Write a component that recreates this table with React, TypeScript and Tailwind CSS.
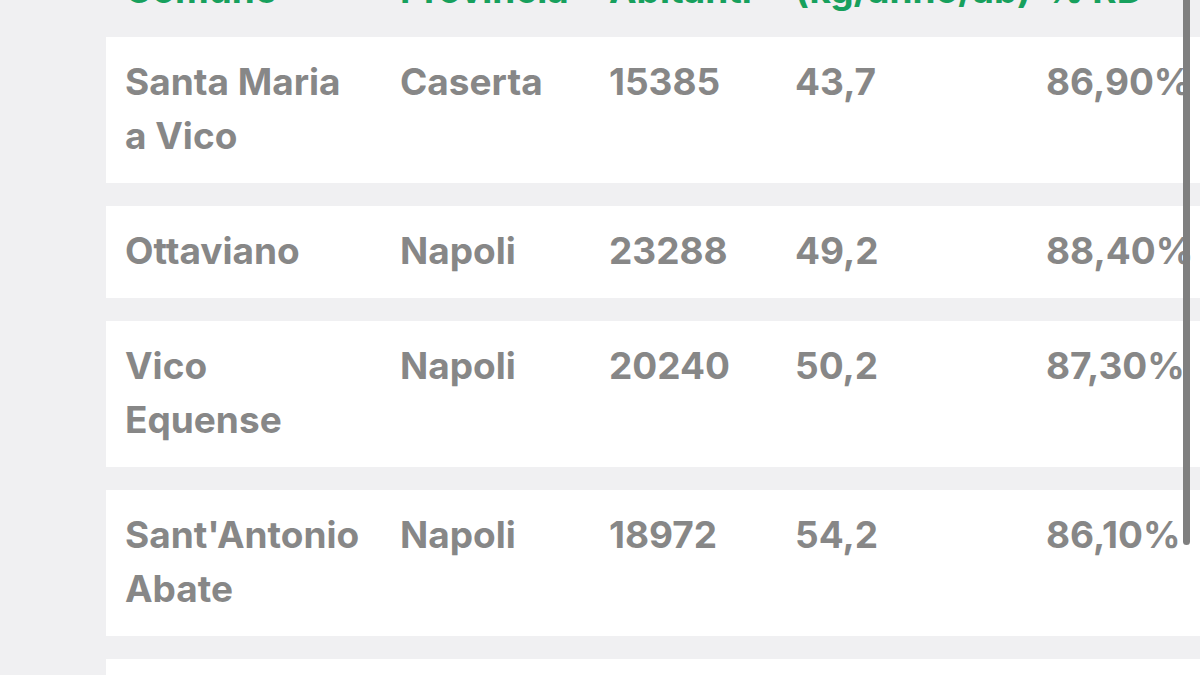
import React from "react";

const rows = [
  { c: "Santa Maria a Vico", p: "Caserta", a: "15385", k: "43,7", rd: "86,90%" },
  { c: "Ottaviano", p: "Napoli", a: "23288", k: "49,2", rd: "88,40%" },
  { c: "Vico Equense", p: "Napoli", a: "20240", k: "50,2", rd: "87,30%" },
  { c: "Sant'Antonio Abate", p: "Napoli", a: "18972", k: "54,2", rd: "86,10%" },
];

const font = { fontFamily: "Inter, 'Noto Sans', sans-serif" };

export default function App() {
  return (
    <div className="relative w-[1200px] h-[675px] overflow-hidden bg-[#f0f0f2]" style={font}>
      <div className="pl-[106px] flex flex-col">
        <div className="h-[37px] overflow-hidden relative">
          <div className="absolute left-0 top-[-37px] grid grid-cols-[275px_209px_186px_251px_1fr] pl-[19px] w-[1094px] text-[37px] leading-[54px] font-bold text-[#17a05d]">
            <div>Comune</div>
            <div>Provincia</div>
            <div>Abitanti</div>
            <div className="whitespace-nowrap">(kg/anno/ab)</div>
            <div className="whitespace-nowrap">% RD</div>
          </div>
        </div>
        <div className="flex flex-col gap-[23px]">
          {rows.map((r) => (
            <div
              key={r.c}
              className="bg-white grid grid-cols-[275px_209px_186px_251px_1fr] pl-[19px] pt-[18px] pb-[20px] text-[37px] leading-[54px] font-bold text-[#878787]"
            >
              <div className="pr-[30px]">{r.c}</div>
              <div>{r.p}</div>
              <div>{r.a}</div>
              <div>{r.k}</div>
              <div className="whitespace-nowrap">{r.rd}</div>
            </div>
          ))}
          <div className="bg-white h-[92px]" />
        </div>
      </div>
      <div className="absolute left-[1183px] top-0 w-[7px] h-[545px] rounded-b-full bg-[#7f7f7f]" />
    </div>
  );
}
